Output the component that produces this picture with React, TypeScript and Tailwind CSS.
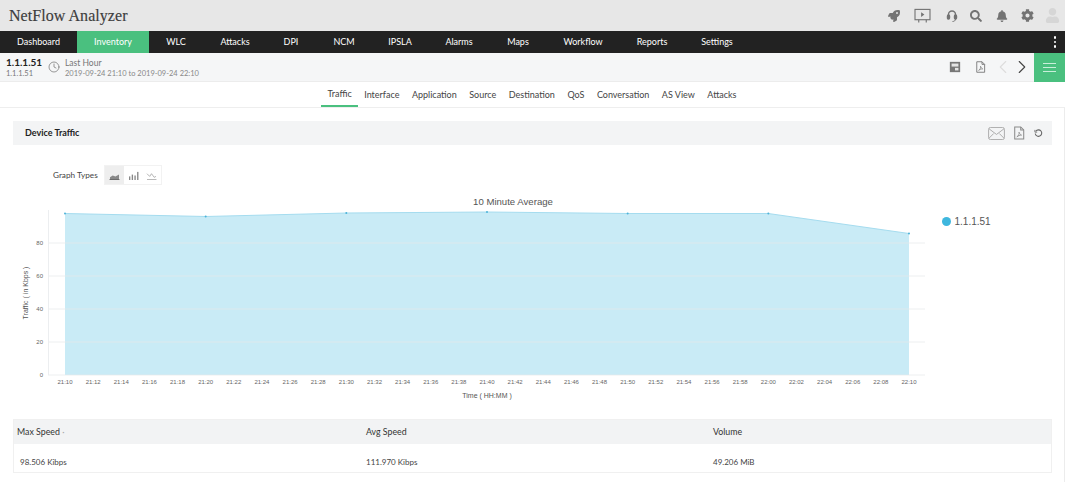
import React from "react";
import { FaBell, FaCog, FaUser, FaSearch, FaRocket } from "react-icons/fa";
import { ChevronLeft, ChevronRight, Clock } from "lucide-react";

const nav: [string, number][] = [
  ["Dashboard", 77], ["Inventory", 72], ["WLC", 54], ["Attacks", 64], ["DPI", 48], ["NCM", 58],
  ["IPSLA", 54], ["Alarms", 64], ["Maps", 54], ["Workflow", 76], ["Reports", 62], ["Settings", 68],
];
const tabs = ["Traffic", "Interface", "Application", "Source", "Destination", "QoS", "Conversation", "AS View", "Attacks"];

const X0 = 65;
const DX = 28.133;
const yOf = (v: number) => 375 - v * 1.65;
const points: [number, number][] = [
  [0, 213.5], [5, 216.5], [10, 213], [15, 212], [20, 213.5], [25, 213.5], [30, 233.5],
];
const times = Array.from({ length: 31 }, (_, i) => {
  const m = 10 + i * 2;
  const h = m >= 60 ? 22 : 21;
  return `${h}:${String(m % 60).padStart(2, "0")}`;
});

function Chart() {
  const line = points.map(([i, y]) => `${X0 + i * DX},${y}`).join(" ");
  const area = `${X0},375 ${line} ${X0 + 30 * DX},375`;
  return (
    <svg width="920" height="215" viewBox="13 190 920 215" className="shrink-0">
      <text x="513" y="204.500" fontSize="9.600" fill="#555" textAnchor="middle" fontFamily="Liberation Sans">10 Minute Average</text>
      <polygon points={area} fill="#c9ebf6" />
      {[0, 20, 40, 60, 80].map((v) => (
        <g key={v}>
          <line x1="48" x2="925" y1={yOf(v)} y2={yOf(v)} stroke="#e6e8ea" strokeOpacity="0.7" strokeWidth="1" />
          <text x="43" y={yOf(v) + 2} fontSize="6" fill="#666" textAnchor="end" fontFamily="Liberation Sans">{v}</text>
        </g>
      ))}
      <line x1="48.500" x2="48.500" y1="210" y2="375" stroke="#eceef0" />
      <polyline points={line} fill="none" stroke="#a5dcef" strokeWidth="1" />
      {points.map(([i, y]) => (
        <circle key={i} cx={X0 + i * DX} cy={y} r="1" fill="#4db3d8" />
      ))}
      {times.map((t, i) => (
        <text key={t} x={X0 + i * DX} y="384" fontSize="6" fill="#666" textAnchor="middle" fontFamily="Liberation Sans">{t}</text>
      ))}
      <text x="487" y="398" fontSize="7" fill="#555" textAnchor="middle" fontFamily="Liberation Sans">Time ( HH:MM )</text>
      <text x="0" y="0" fontSize="7" fill="#555" textAnchor="middle" fontFamily="Liberation Sans" transform="translate(28 293) rotate(-90)">Traffic ( in Kbps )</text>
    </svg>
  );
}

function PdfIcon({ className }: { className: string }) {
  return (
    <svg viewBox="0 0 14 16" className={className} fill="none" stroke="currentColor" strokeWidth="1.2">
      <path d="M2 1h7l3.500 3.500V15H2z" />
      <path d="M9 1v3.500h3.500" />
      <path d="M4.500 12.500c2-1 3-3.500 2.500-5.500.8 2 1.800 3.200 3 3.500-2 0-4 .8-5.500 2z" strokeWidth="0.9" />
    </svg>
  );
}

export default function App() {
  return (
    <div className="h-[482px] w-[1065px] overflow-hidden bg-white font-['Lato','Liberation_Sans',sans-serif]">
      <header className="flex h-[31px] items-center justify-between bg-[#e7e7e7] pl-[9px] pr-[5px]">
        <h1 className="font-['Liberation_Serif',serif] text-[16px] leading-none tracking-[0.05px] text-[#3d3d3d] [-webkit-text-stroke:0.15px_#3d3d3d]">NetFlow Analyzer</h1>
        <div className="flex items-center text-[#737373]">
          <FaRocket className="mr-[13.500px] h-[12px] w-[12px]" />
          <svg viewBox="0 0 18 16" className="mr-[14.500px] h-[15px] w-[17px]" fill="none" stroke="currentColor" strokeWidth="1.200">
            <rect x="1" y="1.500" width="16" height="11" />
            <path d="M7.500 4.500l3.500 2.500-3.500 2.500z" fill="currentColor" stroke="none" />
            <path d="M5 12.500v3M13 12.500v3" />
          </svg>
          <svg viewBox="0 0 14 14" className="mr-[11px] h-[14px] w-[14px]" fill="none" stroke="currentColor" strokeWidth="1.400">
            <path d="M3.500 8V5.500a3.500 3.500 0 0 1 7 0V8" />
            <rect x="2.500" y="6" width="2" height="4" rx="1" fill="currentColor" />
            <rect x="9.500" y="6" width="2" height="4" rx="1" fill="currentColor" />
            <path d="M10.500 10c0 1.800-1.500 2.500-3 2.500" strokeWidth="1" />
          </svg>
          <FaSearch className="mr-[14px] h-[12px] w-[12px]" />
          <FaBell className="mr-[12.500px] h-[12px] w-[12px]" />
          <FaCog className="mr-[11.500px] h-[13px] w-[13px]" />
          <FaUser className="h-[15px] w-[15px] text-[#d6d6d6]" />
        </div>
      </header>

      <nav className="flex h-[22px] items-stretch bg-[#222222]">
        {nav.map(([label, w]) => (
          <a
            key={label}
            style={{ width: w }}
            className={`flex items-center justify-center text-[9px] text-white ${label === "Inventory" ? "bg-[#4ac07f]" : ""}`}
          >
            {label}
          </a>
        ))}
        <div className="ml-auto flex w-[20px] flex-col items-center justify-center gap-[2px]">
          <span className="h-[2.500px] w-[2.500px] rounded-full bg-white" />
          <span className="h-[2.500px] w-[2.500px] rounded-full bg-white" />
          <span className="h-[2.500px] w-[2.500px] rounded-full bg-white" />
        </div>
      </nav>

      <div className="flex h-[29px] items-center border-b border-[#ececec] bg-[#f5f6f7] pl-[6px]">
        <div className="w-[42px]">
          <div className="text-[10px] font-bold leading-[12px] text-[#222]">1.1.1.51</div>
          <div className="text-[7.500px] leading-[11px] text-[#777]">1.1.1.51</div>
        </div>
        <Clock className="h-[12px] w-[12px] text-[#777]" strokeWidth={1.5} />
        <div className="ml-[5px] pt-[2px]">
          <div className="text-[8.500px] leading-[10px] text-[#777]">Last Hour</div>
          <div className="text-[7.500px] leading-[11px] text-[#888]">2019-09-24 21:10 to 2019-09-24 22:10</div>
        </div>
        <div className="ml-auto flex h-full items-center text-[#777]">
          <svg viewBox="0 0 14 14" className="mr-[13.500px] h-[12px] w-[12px]">
            <rect x="1" y="1" width="12" height="12" fill="#777777" />
            <rect x="3" y="3" width="8" height="3.500" fill="#e4e4e4" />
            <rect x="7" y="8" width="4" height="3" fill="#e4e4e4" />
          </svg>
          <PdfIcon className="mr-[6.500px] h-[12px] w-[11px]" />
          <ChevronLeft className="mr-[-3px] h-[22px] w-[22px] text-[#dddddd]" strokeWidth={1.2} />
          <ChevronRight className="mr-[1px] h-[22px] w-[22px] text-[#444]" strokeWidth={1.2} />
          <div className="flex h-[29px] w-[31px] flex-col items-center justify-center gap-[3px] bg-[#4ac07f]">
            <span className="h-px w-[13px] bg-[#c9eeda]" />
            <span className="h-px w-[13px] bg-[#c9eeda]" />
            <span className="h-px w-[13px] bg-[#c9eeda]" />
          </div>
        </div>
      </div>

      <div className="flex h-[26px] items-stretch justify-center gap-[12.500px] border-b border-[#eeeeee] pr-[1px] text-[9px] text-[#444]">
        {tabs.map((t) => (
          <div
            key={t}
            className={`flex items-center ${t === "Traffic" ? "-mx-[6px] border-b-2 border-[#4ac07f] px-[6px]" : ""}`}
          >
            {t}
          </div>
        ))}
      </div>

      <main className="h-[374px] border-r border-[#ececec] pl-[13px] pr-[12px] pt-[13px]">
        <div className="flex h-[24px] items-center justify-between bg-[#f3f4f5] pl-[12px] pr-[9px]">
          <h2 className="text-[9px] font-bold text-[#222]">Device Traffic</h2>
          <div className="flex items-center text-[#a8a8a8]">
            <svg viewBox="0 0 18 14" className="mr-[7.500px] h-[13px] w-[17px]" fill="none" stroke="currentColor" strokeWidth="1">
              <rect x="0.500" y="0.500" width="17" height="13" rx="2" />
              <path d="M1 2l8 6 8-6M1 12l5-5M17 12l-5-5" />
            </svg>
            <PdfIcon className="mr-[9.500px] h-[14px] w-[12px] text-[#8a8a8a]" />
            <svg viewBox="0 0 10 10" className="h-[9px] w-[9px] text-[#666]" fill="none" stroke="currentColor" strokeWidth="1.200">
              <path d="M2 2.500A3.600 3.600 0 1 1 1.400 5" />
              <path d="M1 1v2.500h2.500" strokeWidth="0.900" />
            </svg>
          </div>
        </div>

        <div className="ml-[40px] mt-[20px] flex h-[20px] items-center">
          <span className="mr-[6px] text-[8.200px] text-[#444]">Graph Types</span>
          <div className="flex h-[20px] border border-[#f2f2f2]">
            <div className="flex w-[19px] items-center justify-center bg-[#eeeeee]">
              <svg viewBox="0 0 12 10" className="h-[9px] w-[11px]" fill="none" stroke="#555">
                <path d="M1 7l3-2 3 1 4-2v5H1z" fill="#888" stroke="none" />
                <path d="M0.500 9.500h11" />
              </svg>
            </div>
            <div className="flex w-[19px] items-center justify-center">
              <svg viewBox="0 0 12 10" className="h-[9px] w-[11px]" fill="#888">
                <rect x="1" y="6" width="1.500" height="4" />
                <rect x="4" y="4" width="1.500" height="6" />
                <rect x="7" y="5" width="1.500" height="5" />
                <rect x="10" y="1" width="1.500" height="9" />
              </svg>
            </div>
            <div className="flex w-[18px] items-center justify-center">
              <svg viewBox="0 0 12 10" className="h-[9px] w-[11px]" fill="none" stroke="#999" strokeWidth="0.800">
                <path d="M1 3l3 3 2-3 3 4 2-1M1 9.500h10.500" />
              </svg>
            </div>
          </div>
        </div>

        <div className="mt-[5px] flex">
          <Chart />
          <div className="ml-[8.500px] mt-[25px] flex h-[12px] items-center">
            <span className="h-[9px] w-[9px] rounded-full bg-[#3fb7de]" />
            <span className="ml-[4px] font-['Liberation_Sans',sans-serif] text-[10px] text-[#555]">1.1.1.51</span>
          </div>
        </div>

        <div className="mt-[14px] border border-[#f0f0f0]">
          <div className="grid h-[24px] grid-cols-[349px_347px_1fr] items-center bg-[#f2f3f4] pl-[3px] text-[8.800px] text-[#333]">
            <span>Max Speed <span className="text-[#aaa]">·</span></span>
            <span>Avg Speed</span>
            <span>Volume</span>
          </div>
          <div className="grid h-[28px] grid-cols-[346px_347px_1fr] items-center pl-[6px] pt-[7px] text-[8px] text-[#444]">
            <span>98.506 Kibps</span>
            <span>111.970 Kibps</span>
            <span>49.206 MiB</span>
          </div>
        </div>
      </main>
    </div>
  );
}
